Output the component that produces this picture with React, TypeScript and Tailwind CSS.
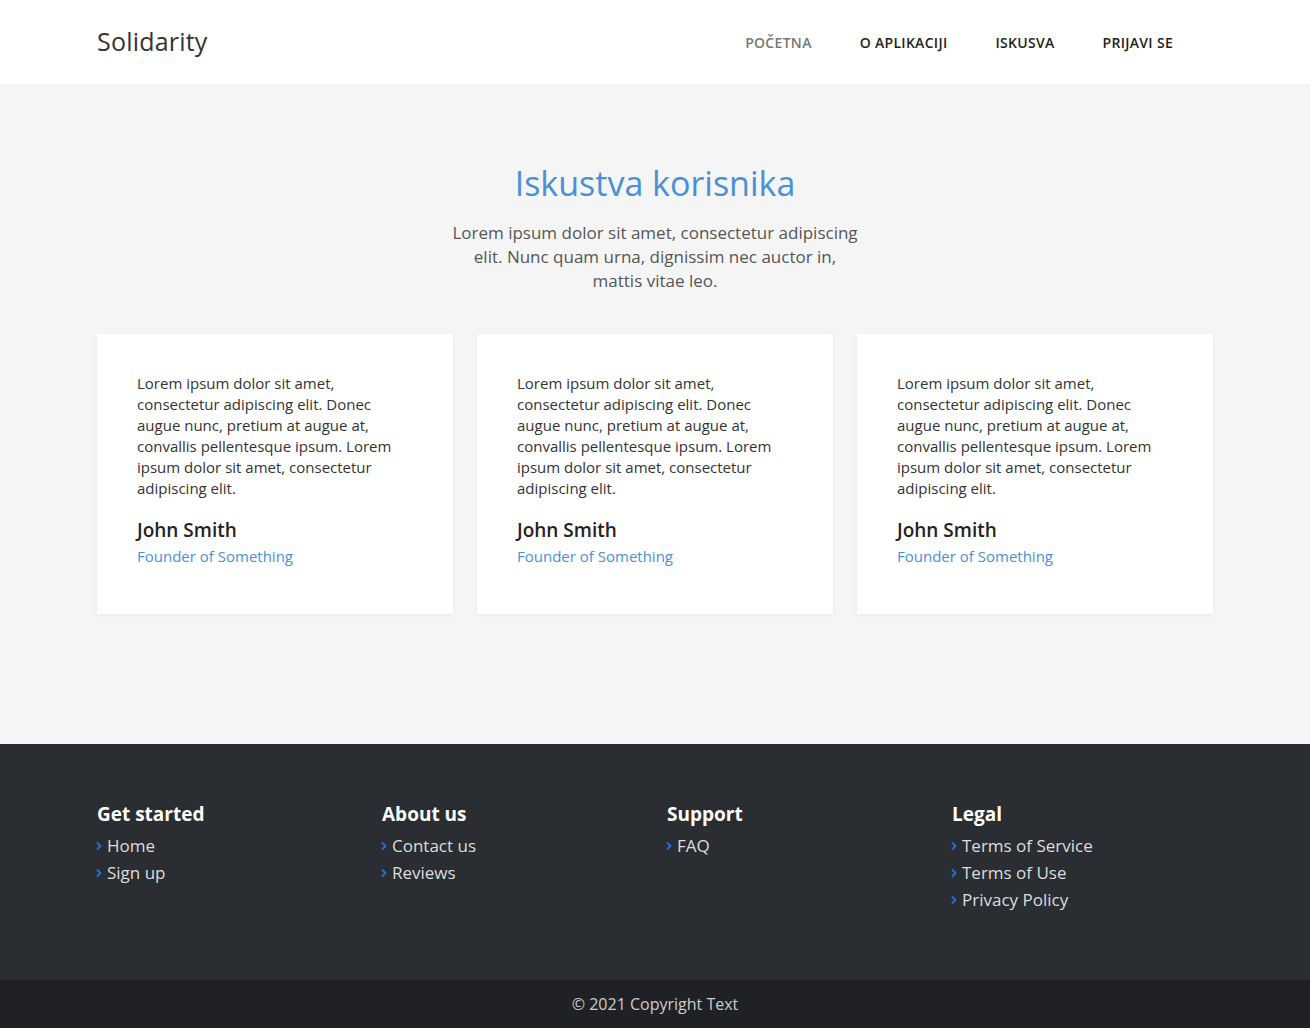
import { ChevronRight } from 'lucide-react';

const font = { fontFamily: '"Open Sans", "Noto Sans", sans-serif' };

const cards = [1, 2, 3];

const columns = [
  { title: 'Get started', links: ['Home', 'Sign up'] },
  { title: 'About us', links: ['Contact us', 'Reviews'] },
  { title: 'Support', links: ['FAQ'] },
  { title: 'Legal', links: ['Terms of Service', 'Terms of Use', 'Privacy Policy'] },
];

export default function App() {
  return (
    <div className="min-h-screen bg-white" style={font}>
      <header className="h-[84px] bg-white">
        <div className="mx-auto flex h-full w-[1116px] items-center justify-between">
          <a className="text-[25px] text-[#333] tracking-[0.2px]">Solidarity</a>
          <nav className="mr-[40px] flex items-center gap-[48px] text-[14px] font-semibold uppercase tracking-[0.3px]">
            <a className="text-[#777]">Početna</a>
            <a className="text-[#222]">O aplikaciji</a>
            <a className="text-[#222]">Iskusva</a>
            <a className="text-[#222]">Prijavi se</a>
          </nav>
        </div>
      </header>

      <section className="bg-[#f5f5f5] pt-[77px] pb-[130px]">
        <div className="mx-auto w-[1116px]">
          <h2 className="text-center text-[34px] leading-[44px] text-[#4a90d6]">Iskustva korisnika</h2>
          <p className="mx-auto mt-[16px] w-[410px] text-center text-[17px] leading-[24px] text-[#555]">
            Lorem ipsum dolor sit amet, consectetur adipiscing elit. Nunc quam urna, dignissim nec auctor in,
            mattis vitae leo.
          </p>
          <div className="mt-[41px] grid grid-cols-3 gap-[24px]">
            {cards.map((c) => (
              <div key={c} className="h-[280px] bg-white px-[40px] pt-[39px] shadow-[0_1px_4px_rgba(0,0,0,0.06)]">
                <p className="text-[15px] leading-[21px] text-[#333]">
                  Lorem ipsum dolor sit amet, consectetur adipiscing elit. Donec augue nunc, pretium at augue at,
                  convallis pellentesque ipsum. Lorem ipsum dolor sit amet, consectetur adipiscing elit.
                </p>
                <h4 className="mt-[18px] text-[19px] font-semibold leading-[26px] text-[#222]">John Smith</h4>
                <p className="text-[15px] leading-[26px] text-[#4a90d6]">Founder of Something</p>
              </div>
            ))}
          </div>
        </div>
      </section>

      <footer className="bg-[#2a2d31] pt-[57px] pb-[67px]">
        <div className="mx-auto w-[1116px]">
          <div className="grid w-[1140px] grid-cols-[285px_285px_285px_285px]">
            {columns.map((col) => (
              <div key={col.title}>
                <h5 className="text-[19px] font-bold leading-[26px] text-white">{col.title}</h5>
                <ul className="mt-[5px]">
                  {col.links.map((l) => (
                    <li key={l} className="flex items-center text-[17px] leading-[27px] text-[#ddd]">
                      <ChevronRight className="-ml-[4px] mr-[2px] h-[12px] w-[12px] text-[#1f6fd6]" strokeWidth={4} />
                      {l}
                    </li>
                  ))}
                </ul>
              </div>
            ))}
          </div>
        </div>
      </footer>

      <div className="flex h-[48px] items-center justify-center bg-[#202124] text-[16px] text-[#ccc]">
        © 2021 Copyright Text
      </div>
    </div>
  );
}
